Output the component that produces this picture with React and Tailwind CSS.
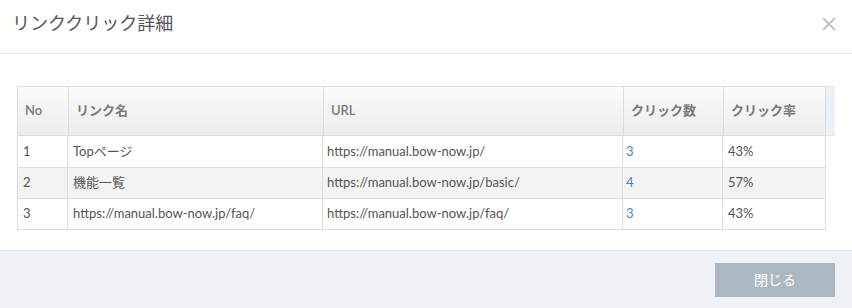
import React from "react";

const rows = [
  { no: "1", name: "Topページ", url: "https://manual.bow-now.jp/", clicks: "3", rate: "43%" },
  { no: "2", name: "機能一覧", url: "https://manual.bow-now.jp/basic/", clicks: "4", rate: "57%" },
  { no: "3", name: "https://manual.bow-now.jp/faq/", url: "https://manual.bow-now.jp/faq/", clicks: "3", rate: "43%" },
];

export default function App() {
  return (
    <div className="w-[852px] h-[308px] bg-white flex flex-col text-[#555] font-['Lato','Noto_Sans_CJK_JP',sans-serif]">
      <div className="h-[54px] shrink-0 flex items-center justify-between pl-[12px] pr-[15px] border-b border-[#e5e5e5]">
        <div className="text-[18px] text-[#555] pb-[6px]">リンククリック詳細</div>
        <svg width="16" height="16" viewBox="0 0 16 16" className="mb-[5px]">
          <path d="M2 2 L14 14 M14 2 L2 14" stroke="#c6c6c6" strokeWidth="2.2" strokeLinecap="butt" />
        </svg>
      </div>
      <div className="flex-1 pt-[32px] px-[17px]">
        <div className="flex">
          <div className="grid grid-cols-[50px_255px_300px_100px_102px] h-[50px] border border-[#dddddd] bg-gradient-to-b from-[#fbfbfb] to-[#ececec] text-[13px] font-semibold text-[#7a7a7a]">
            <div className="flex items-center pl-[7px]">No</div>
            <div className="flex items-center pl-[7px] border-l border-[#dddddd]">リンク名</div>
            <div className="flex items-center pl-[7px] border-l border-[#dddddd]">URL</div>
            <div className="flex items-center pl-[7px] border-l border-[#dddddd]">クリック数</div>
            <div className="flex items-center pl-[7px] border-l border-[#dddddd]">クリック率</div>
          </div>
          <div className="w-[11px] h-[50px] bg-[#edf0f5] border-y border-[#e4e7ec]"></div>
        </div>
        <div className="w-[809px] border-x border-b border-[#dddddd] text-[13px]">
          {rows.map((r, i) => (
            <div
              key={r.no}
              className={`grid grid-cols-[49px_255px_300px_100px_103px] h-[31px] ${i > 0 ? "border-t border-[#dddddd]" : ""} ${i === 1 ? "bg-[#f3f3f3]" : "bg-white"}`}
            >
              <div className="flex items-center pl-[5px]">{r.no}</div>
              <div className="flex items-center pl-[5px] border-l border-[#dddddd]">{r.name}</div>
              <div className="flex items-center pl-[4px] border-l border-[#dddddd]">{r.url}</div>
              <div className="flex items-center pl-[3px] border-l border-[#dddddd]">
                <span className="text-[#3a86d4]">{r.clicks}</span>
              </div>
              <div className="flex items-center pl-[5px] border-l border-[#dddddd]">{r.rate}</div>
            </div>
          ))}
        </div>
      </div>
      <div className="h-[58px] shrink-0 bg-[#eef1f6] border-t border-[#e3e6ec] flex items-center justify-end pr-[17px]">
        <button className="w-[120px] h-[34px] bg-[#abb8c1] text-white text-[14px]">閉じる</button>
      </div>
    </div>
  );
}
